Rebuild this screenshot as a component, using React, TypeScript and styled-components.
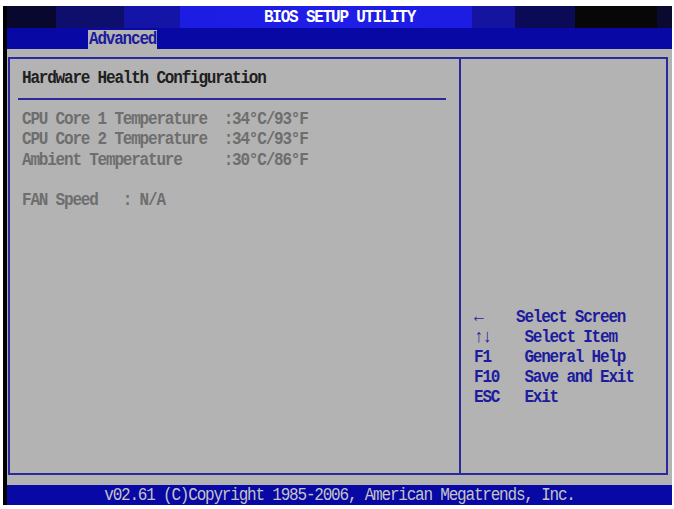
import React from 'react';
import styled, { createGlobalStyle, css } from 'styled-components';

const GlobalStyle = createGlobalStyle`
  html, body {
    margin: 0;
    padding: 0;
    background: #ffffff;
  }
`;

const BLUE = '#0808a4';
const GRAY = '#b3b3b3';
const LINE = '#2a2a9c';

// text-mode glyphs are taller than they are wide
const tall = css`
  transform: scaleY(1.16);
`;

const Screen = styled.div`
  margin: 6px 0 0 3px;
  width: 665px;
  border-left: 4px solid #000;
  display: flex;
  flex-direction: column;
  font-family: 'Liberation Mono', 'DejaVu Sans Mono', monospace;
  font-size: 16px;
  letter-spacing: -1.2px;
  font-weight: bold;
`;

const TitleBar = styled.div`
  height: 22px;
  display: flex;
  align-items: center;
  justify-content: center;
  color: #ffffff;
  background: linear-gradient(
    to right,
    #08082e 0px,
    #08082e 49px,
    #0e0e6c 49px,
    #0e0e6c 117px,
    #1414a6 117px,
    #1414a6 173px,
    #1c1ce2 173px,
    #1e1ee8 320px,
    #1c1ce2 465px,
    #1414a0 465px,
    #1414a0 508px,
    #0a0a56 508px,
    #0a0a56 568px,
    #070707 568px,
    #070707 650px,
    #0a0a30 650px
  );
`;

const TitleText = styled.span`
  ${tall};
`;

const MenuBar = styled.div`
  height: 21px;
  background: ${BLUE};
  display: flex;
  align-items: flex-end;
  padding-left: 81px;
`;

const Tab = styled.div<{ active?: boolean }>`
  height: 19px;
  line-height: 19px;
  padding: 0 1px;
  color: ${(p) => (p.active ? '#1a1a9c' : '#c8c8c8')};
  background: ${(p) => (p.active ? GRAY : 'transparent')};
`;

const TabLabel = styled.span`
  display: inline-block;
  ${tall};
`;

const Body = styled.div`
  background: ${GRAY};
  padding: 8px 4px 10px 1px;
`;

const Panel = styled.div`
  height: 414px;
  border: 2px solid ${LINE};
  display: flex;
`;

const Main = styled.div`
  width: 437px;
  padding: 9px 0 0 12px;
  border-right: 2px solid ${LINE};
`;

const Side = styled.div`
  flex: 1;
  padding: 248px 0 0 13px;
  color: #1c1c9c;
`;

const Row = styled.div<{ tone?: 'heading' | 'item' }>`
  height: 20.4px;
  line-height: 20.4px;
  white-space: pre;
  color: ${(p) => (p.tone === 'heading' ? '#202020' : '#6e6e6e')};
  ${tall};
`;

const RuleRow = styled.div`
  height: 20.4px;
  display: flex;
  align-items: center;
`;

const Rule = styled.div`
  margin-left: -4px;
  width: 428px;
  height: 2px;
  background: ${LINE};
`;

const HelpRow = styled.div`
  height: 20px;
  line-height: 20px;
  white-space: pre;
  ${tall};
`;

const Footer = styled.div`
  height: 20px;
  line-height: 20px;
  background: ${BLUE};
  color: #c4c4c4;
  text-align: center;
  font-weight: normal;
`;

const FooterText = styled.span`
  display: inline-block;
  ${tall};
`;

const readings = [
  'CPU Core 1 Temperature  :34°C/93°F',
  'CPU Core 2 Temperature  :34°C/93°F',
  'Ambient Temperature     :30°C/86°F',
];

const help = [
  '←    Select Screen',
  '↑↓    Select Item',
  'F1    General Help',
  'F10   Save and Exit',
  'ESC   Exit',
];

const App: React.FC = () => {
  return (
    <>
      <GlobalStyle />
      <Screen>
        <TitleBar>
          <TitleText>BIOS SETUP UTILITY</TitleText>
        </TitleBar>
        <MenuBar>
          <Tab active>
            <TabLabel>Advanced</TabLabel>
          </Tab>
        </MenuBar>
        <Body>
          <Panel>
            <Main>
              <Row tone="heading">Hardware Health Configuration</Row>
              <RuleRow>
                <Rule />
              </RuleRow>
              {readings.map((r) => (
                <Row key={r} tone="item">
                  {r}
                </Row>
              ))}
              <Row />
              <Row tone="item">FAN Speed   : N/A</Row>
            </Main>
            <Side>
              {help.map((h) => (
                <HelpRow key={h}>{h}</HelpRow>
              ))}
            </Side>
          </Panel>
        </Body>
        <Footer>
          <FooterText>v02.61 (C)Copyright 1985-2006, American Megatrends, Inc.</FooterText>
        </Footer>
      </Screen>
    </>
  );
};

export default App;
